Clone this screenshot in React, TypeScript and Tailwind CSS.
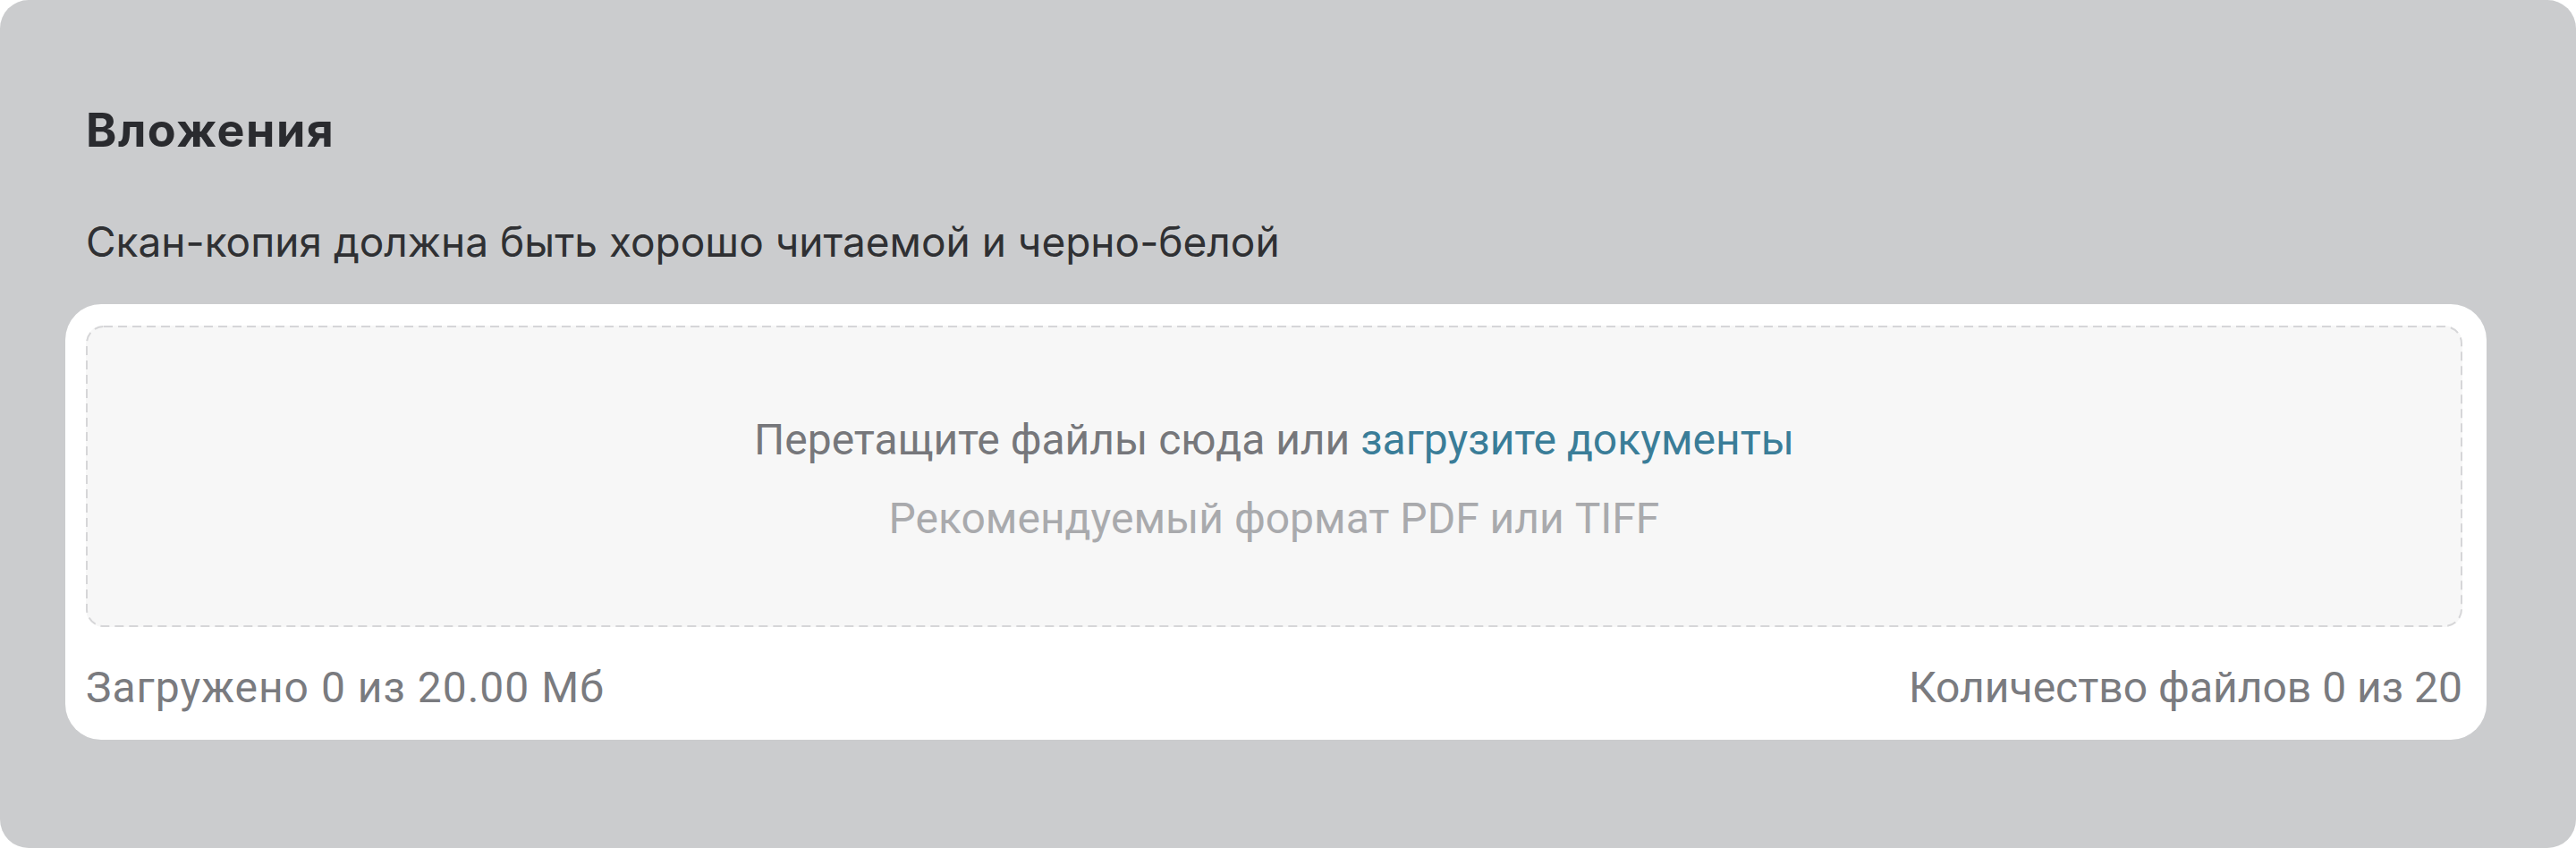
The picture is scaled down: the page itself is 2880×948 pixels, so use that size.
export default function App() {
  return (
    // Page
    <div className="w-[2880px] h-[948px] bg-white">
      {/* Grey section panel */}
      <div className="h-[948px] rounded-[32px] bg-[#cbccce] pl-[73px] pr-[100px] pt-[116px]">
        {/* Heading */}
        <div className="px-[23px] font-['Inter',sans-serif]">
          <h2 className="text-[52px] leading-[60px] font-bold tracking-[1.5px] text-[#2a2b2f]">Вложения</h2>
          <p className="mt-[68px] text-[46px] leading-[52px] text-[#2f3033]">
            Скан-копия должна быть хорошо читаемой и черно-белой
          </p>
        </div>

        {/* Upload card */}
        <div className="mt-[44px] rounded-[40px] bg-white pt-[24px] pl-[23px] pr-[27px] pb-[30px] font-['Roboto',sans-serif]">
          {/* Drop zone */}
          <div className="relative h-[337px] rounded-[20px] bg-[#f7f7f7] pt-[100px] flex flex-col items-center gap-[32px] text-[48px] leading-[56px]">
            <svg className="absolute inset-0 w-full h-full" preserveAspectRatio="none">
              <rect
                x="1"
                y="1"
                width="calc(100% - 2px)"
                height="calc(100% - 2px)"
                rx="19"
                fill="none"
                stroke="#d6d6d8"
                strokeWidth="2"
                strokeDasharray="10 6"
              />
            </svg>
            <p className="relative text-[#76777b]">
              Перетащите файлы сюда или <a className="text-[#3a7d98]">загрузите документы</a>
            </p>
            <p className="relative text-[#a9aaad]">Рекомендуемый формат PDF или TIFF</p>
          </div>

          {/* Limits */}
          <div className="mt-[40px] flex justify-between text-[48px] leading-[56px] text-[#7a7b7f]">
            <span className="tracking-[1px]">Загружено 0 из 20.00 Мб</span>
            <span>Количество файлов 0 из 20</span>
          </div>
        </div>
      </div>
    </div>
  )
}
